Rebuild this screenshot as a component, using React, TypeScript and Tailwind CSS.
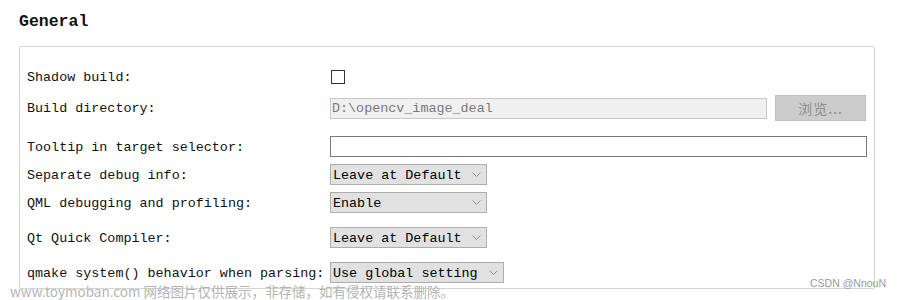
import React from 'react';

const mono = "font-['Liberation_Mono','Noto_Sans_CJK_SC',monospace]";

const Chevron: React.FC = () => (
  <svg width="9" height="5" viewBox="0 0 9 5" className="shrink-0">
    <path d="M0.5 0.5 L4.5 4.5 L8.5 0.5" fill="none" stroke="#8a8a8a" strokeWidth="0.9" />
  </svg>
);

const Select: React.FC<{ value: string; width: string }> = ({ value, width }) => (
  <div
    className={`flex h-[21px] items-center justify-between border border-[#adadad] bg-[#e1e1e1] pl-[2px] pr-[5px] text-[13.4px] text-black ${width}`}
  >
    <span className="pt-[2px] leading-none">{value}</span>
    <Chevron />
  </div>
);

const Row: React.FC<{ label: string; className: string; children: React.ReactNode }> = ({
  label,
  className,
  children,
}) => (
  <div className={`flex items-center ${className}`}>
    <div className="w-[303px] shrink-0 pt-[2px] text-[13.4px] leading-none text-[#111]">{label}</div>
    <div className="flex flex-1 items-center">{children}</div>
  </div>
);

export default function App() {
  return (
    <div className={`relative h-[300px] w-[898px] overflow-hidden bg-white ${mono}`}>
      <div className="pl-[19px] pt-[13px] text-[16.5px] font-bold leading-[17px] text-[#111]">General</div>

      {/* Panel */}
      <div className="ml-[19px] mt-[16px] h-[243px] w-[856px] rounded-[2px] border border-[#d4d4d4] pl-[7px] pr-[8px] pt-[17px]">
        <Row label="Shadow build:" className="h-[26px]">
          <div className="ml-[1px] h-[14px] w-[14px] border border-[#333] bg-white" />
        </Row>

        <Row label="Build directory:" className="mt-[5px] h-[26px]">
          <div className="flex h-[21px] w-[437px] items-center border border-[#c8c8c8] bg-[#f0f0f0] pl-[1px] pt-[2px] text-[13.4px] leading-none text-[#7a7a7a]">
            D:\opencv_image_deal
          </div>
          <div className="ml-[8px] flex h-[26px] w-[91px] items-center justify-center border border-[#bdbdbd] bg-[#cccccc] text-[14px] text-[#8c8c8c]">
            <span className="font-['Noto_Sans_CJK_SC',sans-serif] tracking-[1px]">浏览...</span>
          </div>
        </Row>

        <Row label="Tooltip in target selector:" className="mt-[15px] h-[21px]">
          <div className="h-[21px] w-[537px] border border-[#7a7a7a] bg-white" />
        </Row>

        <Row label="Separate debug info:" className="mt-[7px] h-[21px]">
          <Select value="Leave at Default" width="w-[157px]" />
        </Row>

        <Row label="QML debugging and profiling:" className="mt-[7px] h-[21px]">
          <Select value="Enable" width="w-[157px]" />
        </Row>

        <Row label="Qt Quick Compiler:" className="mt-[14px] h-[21px]">
          <Select value="Leave at Default" width="w-[157px]" />
        </Row>

        <Row label="qmake system() behavior when parsing:" className="mt-[14px] h-[21px]">
          <Select value="Use global setting" width="w-[174px]" />
        </Row>
      </div>

      {/* Watermarks */}
      <div className="absolute left-[10px] top-[284px] font-['Noto_Sans_CJK_SC',sans-serif] text-[13.5px] leading-[15px] text-[#b4b4b4]">
        www.toymoban.com 网络图片仅供展示，非存储，如有侵权请联系删除。
      </div>
      <div className="absolute left-[810px] top-[276px] font-['Liberation_Sans',sans-serif] text-[10.5px] leading-[14px] text-[#9a9a9a]">
        CSDN @NnouN
      </div>
    </div>
  );
}
